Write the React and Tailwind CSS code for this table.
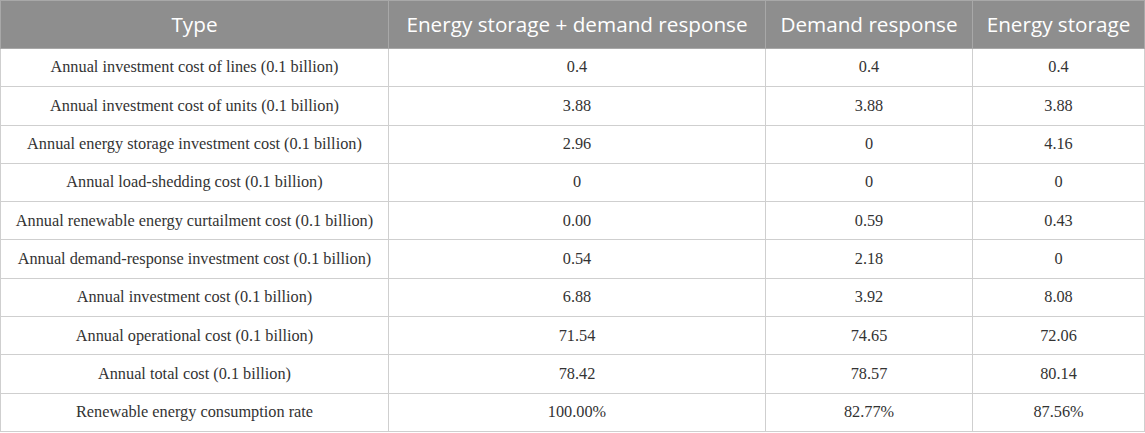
export default function App() {
  const rows = [
    ["Annual investment cost of lines (0.1 billion)", "0.4", "0.4", "0.4"],
    ["Annual investment cost of units (0.1 billion)", "3.88", "3.88", "3.88"],
    ["Annual energy storage investment cost (0.1 billion)", "2.96", "0", "4.16"],
    ["Annual load-shedding cost (0.1 billion)", "0", "0", "0"],
    ["Annual renewable energy curtailment cost (0.1 billion)", "0.00", "0.59", "0.43"],
    ["Annual demand-response investment cost (0.1 billion)", "0.54", "2.18", "0"],
    ["Annual investment cost (0.1 billion)", "6.88", "3.92", "8.08"],
    ["Annual operational cost (0.1 billion)", "71.54", "74.65", "72.06"],
    ["Annual total cost (0.1 billion)", "78.42", "78.57", "80.14"],
    ["Renewable energy consumption rate", "100.00%", "82.77%", "87.56%"],
  ];
  const heads = ["Type", "Energy storage + demand response", "Demand response", "Energy storage"];
  return (
    <div className="w-[1145px] h-[433px] bg-white">
      <table className="w-[1144px] border-collapse table-fixed">
        <colgroup>
          <col className="w-[388px]" />
          <col className="w-[377px]" />
          <col className="w-[207px]" />
          <col className="w-[172px]" />
        </colgroup>
        <thead>
          <tr className="h-[48px] bg-[#8e8e8e]">
            {heads.map((h, i) => (
              <th
                key={i}
                className="border border-[#a8a8a8] text-white font-normal text-[20.7px] text-center px-1 whitespace-nowrap font-['Open_Sans','Noto_Sans',sans-serif]"
              >
                {h}
              </th>
            ))}
          </tr>
        </thead>
        <tbody>
          {rows.map((r, ri) => (
            <tr key={ri} className="h-[38.3px]">
              {r.map((c, ci) => (
                <td
                  key={ci}
                  className="border border-[#cfcfcf] text-center text-[16.3px] text-[#333333] px-1 whitespace-nowrap font-['Liberation_Serif','Times_New_Roman',serif]"
                >
                  {c}
                </td>
              ))}
            </tr>
          ))}
        </tbody>
      </table>
    </div>
  );
}
